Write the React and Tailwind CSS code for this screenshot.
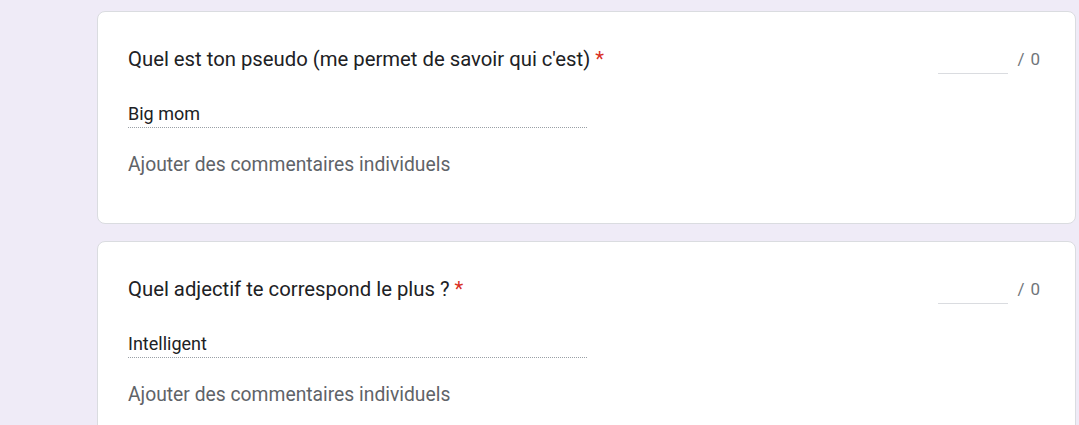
export default function App() {
  const questions = [
    { title: "Quel est ton pseudo (me permet de savoir qui c'est)", answer: 'Big mom' },
    { title: 'Quel adjectif te correspond le plus ?', answer: 'Intelligent' },
  ];

  return (
    <div
      className="min-h-screen h-[425px] overflow-hidden bg-[#efebf7] pl-[97px] pr-[3px] pt-[11px] flex flex-col gap-[17px]"
      style={{ fontFamily: 'Roboto, "Liberation Sans", sans-serif' }}
    >
      {questions.map((q, i) => (
        <div
          key={i}
          className="bg-white rounded-[8px] border border-[#dadce0] pl-[30px] pr-[35px] pt-[33px] pb-[46px] shrink-0"
        >
          <div className="flex items-start justify-between">
            <div className="text-[20.3px] leading-[28px] text-[#202124]">
              {q.title} <span className="text-[#d93025]">*</span>
            </div>
            <div className="flex items-start">
              <div className="w-[70px] h-[29px] border-b border-[#dadce0]" />
              <div className="ml-[9px] flex gap-[6px] text-[17px] leading-[28px] text-[#70757a]">
                <span>/</span>
                <span>0</span>
              </div>
            </div>
          </div>
          <div className="mt-[28px] w-[459px] border-b border-dotted border-[#9aa0a6] pb-[1px] text-[18px] leading-[24px] text-[#202124]">
            {q.answer}
          </div>
          <div className="mt-[25px] text-[19.3px] leading-[24px] text-[#5f6368]">
            Ajouter des commentaires individuels
          </div>
        </div>
      ))}
    </div>
  );
}
